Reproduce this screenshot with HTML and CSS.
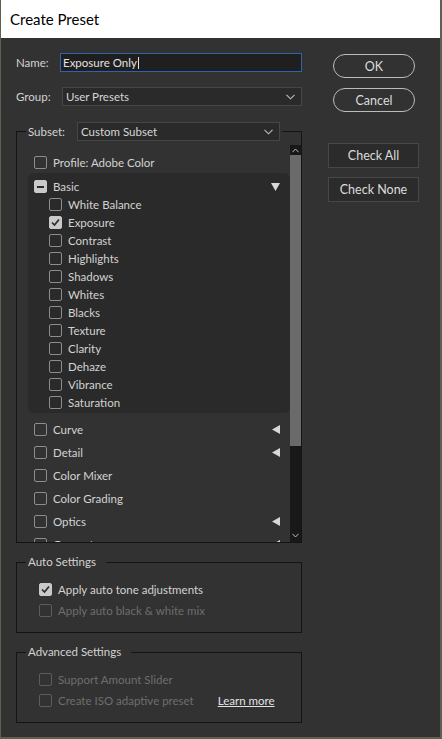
FILE: index.html
```html
<!DOCTYPE html>
<html lang="en">
<head>
<meta charset="utf-8">
<title>Create Preset</title>
<link rel="stylesheet" href="styles.css">
</head>
<body>
<div class="window">
  <div class="titlebar">Create Preset</div>
  <div class="dialog">
    <div class="main">
      <div class="field">
        <span class="field-label">Name:</span>
        <div class="input">Exposure Only<span class="caret"></span></div>
      </div>
      <div class="field">
        <span class="field-label">Group:</span>
        <div class="select">User Presets<svg class="chev" width="9" height="6" viewBox="0 0 9 6"><polyline points="0.5,0.8 4.5,4.8 8.5,0.8"/></svg></div>
      </div>

      <fieldset class="subset">
        <legend>
          <span class="subset-label">Subset:</span>
          <span class="select">Custom Subset<svg class="chev" width="9" height="6" viewBox="0 0 9 6"><polyline points="0.5,0.8 4.5,4.8 8.5,0.8"/></svg></span>
        </legend>
        <div class="list-wrap">
          <div class="list">
            <div class="row first"><span class="cb"></span>Profile: Adobe Color</div>
            <div class="panel">
              <div class="row head"><span class="cb mixed"></span>Basic<svg class="tri" width="9" height="8" viewBox="0 0 9 8"><polygon points="0,0 9,0 4.5,8"/></svg></div>
              <div class="row sub"><span class="cb"></span>White Balance</div>
              <div class="row sub"><span class="cb on"><svg width="11" height="11" viewBox="0 0 11 11"><polyline points="2,5.5 4.5,8 9,2.5"/></svg></span>Exposure</div>
              <div class="row sub"><span class="cb"></span>Contrast</div>
              <div class="row sub"><span class="cb"></span>Highlights</div>
              <div class="row sub"><span class="cb"></span>Shadows</div>
              <div class="row sub"><span class="cb"></span>Whites</div>
              <div class="row sub"><span class="cb"></span>Blacks</div>
              <div class="row sub"><span class="cb"></span>Texture</div>
              <div class="row sub"><span class="cb"></span>Clarity</div>
              <div class="row sub"><span class="cb"></span>Dehaze</div>
              <div class="row sub"><span class="cb"></span>Vibrance</div>
              <div class="row sub"><span class="cb"></span>Saturation</div>
            </div>
            <div class="rows">
              <div class="row top"><span class="cb"></span>Curve<svg class="tri" width="8" height="9" viewBox="0 0 8 9"><polygon points="8,0 8,9 0,4.5"/></svg></div>
              <div class="row top"><span class="cb"></span>Detail<svg class="tri" width="8" height="9" viewBox="0 0 8 9"><polygon points="8,0 8,9 0,4.5"/></svg></div>
              <div class="row top"><span class="cb"></span>Color Mixer</div>
              <div class="row top"><span class="cb"></span>Color Grading</div>
              <div class="row top"><span class="cb"></span>Optics<svg class="tri" width="8" height="9" viewBox="0 0 8 9"><polygon points="8,0 8,9 0,4.5"/></svg></div>
              <div class="row top"><span class="cb"></span>Geometry<svg class="tri" width="8" height="9" viewBox="0 0 8 9"><polygon points="8,0 8,9 0,4.5"/></svg></div>
            </div>
          </div>
          <div class="scrollbar">
            <div class="sb-btn"><svg width="7" height="5" viewBox="0 0 7 5"><polyline points="0.5,4.2 3.5,1 6.5,4.2"/></svg></div>
            <div class="sb-thumb"></div>
            <div class="sb-track"><svg width="7" height="5" viewBox="0 0 7 5"><polyline points="0.5,0.8 3.5,4 6.5,0.8"/></svg></div>
          </div>
        </div>
      </fieldset>

      <fieldset class="box auto">
        <legend>Auto Settings</legend>
        <div class="opts">
          <div class="opt"><span class="cb on"><svg width="11" height="11" viewBox="0 0 11 11"><polyline points="2,5.5 4.5,8 9,2.5"/></svg></span>Apply auto tone adjustments</div>
          <div class="opt off"><span class="cb"></span>Apply auto black &amp; white mix</div>
        </div>
      </fieldset>

      <fieldset class="box advanced">
        <legend>Advanced Settings</legend>
        <div class="opts">
          <div class="opt off"><span class="cb"></span>Support Amount Slider</div>
          <div class="opt off"><span class="cb"></span>Create ISO adaptive preset<a class="learn" href="#">Learn more</a></div>
        </div>
      </fieldset>
    </div>

    <div class="side">
      <button class="btn pill ok">OK</button>
      <button class="btn pill cancel">Cancel</button>
      <button class="btn rect checkall">Check All</button>
      <button class="btn rect checknone">Check None</button>
    </div>
  </div>
</div>
</body>
</html>
```

FILE: styles.css
```css
* { box-sizing: border-box; }
html, body { margin: 0; padding: 0; }
body {
  width: 442px;
  height: 739px;
  overflow: hidden;
  background: #5e6050;
  font-family: Lato, "DejaVu Sans", sans-serif;
  font-size: 11.5px;
  color: #d3d3d3;
}
.window {
  margin-left: 1px;
  width: 439px;
  height: 737px;
  background: #323232;
  display: flex;
  flex-direction: column;
}
.titlebar {
  flex: none;
  height: 38px;
  line-height: 38px;
  background: #fff;
  color: #000;
  font-size: 15px;
  padding-left: 9px;
}
.dialog {
  display: flex;
  padding: 15px 0 0 15px;
}
.main { width: 286px; flex: none; }
.side {
  display: flex;
  flex-direction: column;
  align-items: flex-start;
  margin-left: 26px;
}

/* top fields */
.field { display: flex; align-items: center; height: 19px; }
.field + .field { margin-top: 15px; }
.field-label { width: 44px; flex: none; }
.input {
  width: 242px;
  height: 19px;
  border: 1px solid #2f64ad;
  background: #1f1f1f;
  padding-left: 2px;
  display: flex;
  align-items: center;
  color: #e2e2e2;
}
.caret { width: 1px; height: 12px; background: #e2e2e2; margin-left: 1px; }
.select {
  display: flex;
  align-items: center;
  justify-content: space-between;
  height: 19px;
  background: #2a2a2a;
  border: 1px solid #464646;
  padding: 0 6px 0 3px;
  color: #d6d6d6;
}
.field .select { width: 240px; margin-left: 2px; }
.chev { fill: none; stroke: #bdbdbd; stroke-width: 1.1; }

/* fieldsets */
fieldset {
  margin: 0;
  padding: 0;
  min-width: 0;
  border: 1px solid #141414;
}
legend { margin-left: 9px; padding: 0 2px; }
.subset { margin-top: 16px; }
.subset legend { display: flex; align-items: center; }
.subset-label { width: 49px; }
.subset .select { width: 203px; }

.list-wrap {
  display: flex;
  height: 397px;
  margin-top: 4px;
  padding-left: 11px;
}
.list { flex: 1; overflow: hidden; padding-top: 7px; }
.row {
  display: flex;
  align-items: center;
  padding: 0 10px 0 6px;
  white-space: nowrap;
}
.row.first { height: 21px; }
.panel {
  background: #2a2a2a;
  border-radius: 6px;
  padding: 5px 0 2px;
}
.row.head { height: 17px; }
.row.sub { height: 18px; padding-left: 21px; }
.rows { padding-top: 5px; }
.row.top { height: 23px; }
.tri { margin-left: auto; fill: #d8d8d8; }

.cb {
  flex: none;
  width: 13px;
  height: 13px;
  border: 1px solid #8d8d8d;
  border-radius: 2px;
  margin-right: 6px;
  display: flex;
  align-items: center;
  justify-content: center;
}
.cb.on, .cb.mixed { background: #c9c9c9; border-color: #c9c9c9; }
.cb.on svg { fill: none; stroke: #2c2c2c; stroke-width: 1.7; }
.cb.mixed::after {
  content: "";
  width: 7px;
  height: 2px;
  background: #2c2c2c;
}

.scrollbar {
  flex: none;
  width: 11px;
  display: flex;
  flex-direction: column;
}
.scrollbar svg { fill: none; stroke: #bdbdbd; stroke-width: 1; }
.sb-btn {
  height: 10px;
  background: #181818;
  display: flex;
  justify-content: center;
  align-items: center;
}
.sb-thumb { height: 291px; background: #6a6a6a; }
.sb-track {
  flex: 1;
  background: #181818;
  display: flex;
  justify-content: center;
  align-items: flex-end;
  padding-bottom: 4px;
}

.box { margin-top: 11px; }
.box legend { line-height: 16px; padding: 0 10px 0 2px; }
.opts { padding: 9px 0 11px 22px; }
.opt { display: flex; align-items: center; height: 21px; white-space: nowrap; }
.opt.off { color: #6e6e6e; }
.opt.off .cb { border-color: #5c5c5c; }
.learn {
  margin-left: 24px;
  color: #e2e2e2;
  text-decoration: underline;
}

/* buttons */
.btn {
  font-family: inherit;
  font-size: 12.5px;
  color: #dcdcdc;
  background: transparent;
  padding: 0;
  display: flex;
  align-items: center;
  justify-content: center;
}
.pill {
  width: 82px;
  height: 24px;
  border: 1.5px solid #bcbcbc;
  border-radius: 12px;
  margin-left: 5px;
}
.ok { margin-top: 1px; }
.cancel { margin-top: 10px; }
.rect {
  width: 91px;
  height: 25px;
  border: 1px solid #474747;
  background: #2b2b2b;
}
.checkall { margin-top: 31px; }
.checknone { margin-top: 9px; }
```
